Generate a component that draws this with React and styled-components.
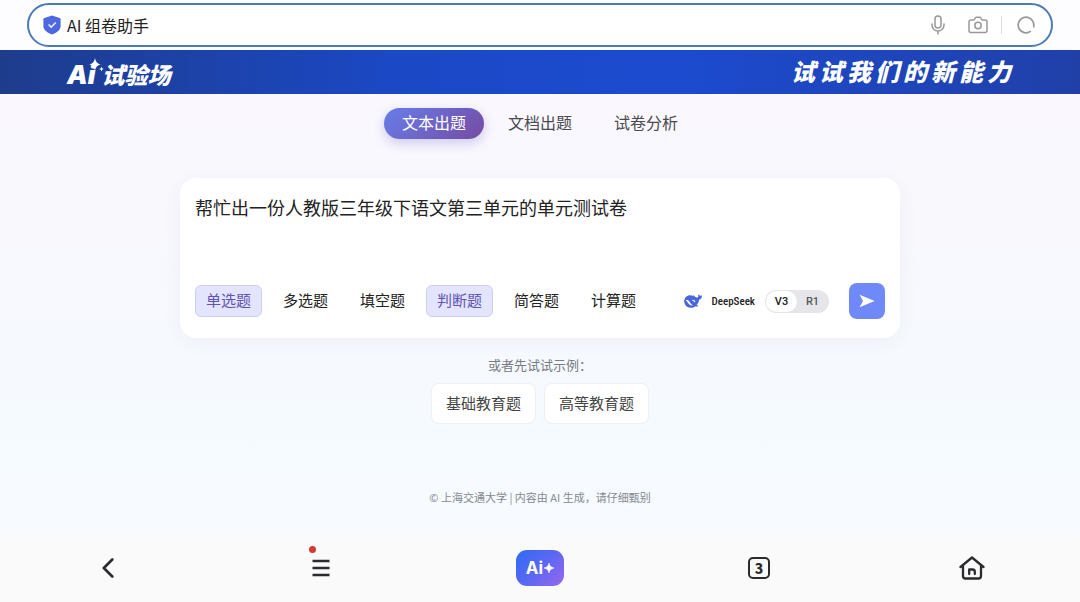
import React, { useState } from 'react';
import styled, { createGlobalStyle } from 'styled-components';

const GlobalStyle = createGlobalStyle`
  * {
    box-sizing: border-box;
  }

  body {
    margin: 0;
    font-family: 'Noto Sans CJK SC', 'Noto Sans', sans-serif;
    color: #222;
  }

  button,
  input,
  textarea {
    font-family: inherit;
    color: inherit;
  }
`;

const Page = styled.div`
  min-height: 100vh;
  display: flex;
  flex-direction: column;
  background: linear-gradient(180deg, #faf8fe 90px, #f8f8fd 230px, #f5faff 420px, #f7fbff 530px);
`;

const TopBar = styled.header`
  padding: 3px 27px;
  background: #fdfdff;
`;

const SearchBox = styled.div`
  height: 44px;
  display: flex;
  align-items: center;
  gap: 13px;
  padding: 0 14px;
  border: 2px solid #4a7ab8;
  border-radius: 22px;
  background: #fff;
`;

const SearchField = styled.label`
  flex: 1;
  display: flex;
  align-items: center;
  gap: 6px;
`;

const SearchInput = styled.input`
  flex: 1;
  min-width: 0;
  padding: 0;
  border: none;
  outline: none;
  background: transparent;
  font-size: 16px;
  line-height: 24px;
`;

const SearchTools = styled.div`
  display: flex;
  gap: 20px;
`;

const IconButton = styled.button`
  display: flex;
  align-items: center;
  justify-content: center;
  width: 20px;
  height: 24px;
  padding: 0;
  border: none;
  background: transparent;
  color: #999;
  cursor: pointer;
`;

const Reload = styled.div`
  display: flex;
  align-items: center;
  gap: 14px;
  padding-right: 1px;

  &::before {
    content: '';
    width: 1px;
    height: 18px;
    background: #ddd;
  }
`;

const Banner = styled.div`
  height: 44px;
  display: flex;
  align-items: center;
  justify-content: space-between;
  padding: 0 65px 0 67px;
  background: linear-gradient(90deg, #1e3c8c, #1b48c4 36%, #1c4bd0 62%, #2040a8);
  color: #fff;
  font-style: italic;
  font-weight: 900;
`;

const Logo = styled.div`
  position: relative;
  display: flex;
  align-items: baseline;
  gap: 6px;
  padding-top: 4px;
  font-size: 23px;
  line-height: 32px;
`;

const LogoMark = styled.span`
  font-family: Inter, 'Noto Sans CJK SC', sans-serif;
  font-size: 26px;
`;

const LogoStar = styled.svg`
  position: absolute;
  left: 20px;
  top: 4px;
`;

const Slogan = styled.div`
  padding-bottom: 2px;
  font-size: 24px;
  line-height: 32px;
  letter-spacing: 4px;
`;

const Main = styled.main`
  flex: 1;
  display: flex;
  flex-direction: column;
  align-items: center;
  padding: 14px 16px 25px;
`;

const Tabs = styled.nav`
  display: flex;
  gap: 6px;
`;

const Tab = styled.button`
  height: 31px;
  padding: 0 18px 3px;
  border: none;
  border-radius: 16px;
  font-size: 16px;
  line-height: 24px;
  cursor: pointer;
  color: ${(props) => (props.$active ? '#fff' : '#4a4a52')};
  background: ${(props) => (props.$active ? 'linear-gradient(135deg, #667eea, #764ba2)' : 'transparent')};
  box-shadow: ${(props) => (props.$active ? '0 4px 12px rgba(102, 90, 200, 0.3)' : 'none')};
`;

const Card = styled.section`
  width: 100%;
  max-width: 720px;
  margin-top: 39px;
  padding: 15px 15px 19px;
  border-radius: 16px;
  background: #fff;
  box-shadow: 0 4px 20px rgba(60, 70, 110, 0.05);
`;

const Prompt = styled.textarea`
  display: block;
  width: 100%;
  height: 90px;
  padding: 0;
  border: none;
  outline: none;
  resize: none;
  background: transparent;
  font-size: 18px;
  line-height: 28px;
`;

const Toolbar = styled.div`
  display: flex;
  align-items: center;
  justify-content: space-between;
`;

const ChipList = styled.div`
  display: flex;
  gap: 10px;
`;

const Chip = styled.button`
  height: 32px;
  padding: 0 10px 2px;
  border: 1px solid ${(props) => (props.$active ? '#cdd0ee' : 'transparent')};
  border-radius: 6px;
  background: ${(props) => (props.$active ? '#e2e5fd' : 'transparent')};
  color: ${(props) => (props.$active ? '#6153b4' : '#222')};
  font-size: 15px;
  line-height: 22px;
  cursor: pointer;
`;

const Actions = styled.div`
  display: flex;
  align-items: center;
  gap: 20px;
`;

const Model = styled.div`
  display: flex;
  align-items: center;
  gap: 10px;
  font-family: 'Roboto Condensed', Roboto, sans-serif;
  font-size: 11px;
  font-weight: 500;
`;

const Switch = styled.div`
  display: flex;
  padding: 1px;
  border-radius: 12px;
  background: #e5e5ea;
`;

const SwitchOption = styled.button`
  width: 31px;
  height: 21px;
  padding: 0;
  border: none;
  border-radius: 11px;
  background: ${(props) => (props.$active ? '#fff' : 'transparent')};
  color: ${(props) => (props.$active ? '#222' : '#555')};
  font-family: Roboto, sans-serif;
  font-size: 11px;
  font-weight: 500;
  cursor: pointer;
`;

const SendButton = styled.button`
  display: flex;
  align-items: center;
  justify-content: center;
  width: 36px;
  height: 36px;
  padding: 0;
  border: none;
  border-radius: 8px;
  background: #6f8af8;
  cursor: pointer;
`;

const Hint = styled.p`
  margin: 17px 0 8px;
  color: #777b82;
  font-size: 13px;
  line-height: 20px;
`;

const Examples = styled.div`
  display: flex;
  gap: 8px;
`;

const ExampleButton = styled.button`
  height: 41px;
  padding: 0 14px 2px;
  border: 1px solid #eef0f4;
  border-radius: 8px;
  background: #fff;
  color: #444;
  font-size: 15px;
  line-height: 22px;
  cursor: pointer;
`;

const Footer = styled.footer`
  margin-top: auto;
  color: #85898f;
  font-size: 11px;
  line-height: 20px;
`;

const BottomNav = styled.nav`
  height: 70px;
  display: flex;
  align-items: center;
  justify-content: space-between;
  padding: 2px 90px 0;
  background: #fafafb;
`;

const NavButton = styled.button`
  position: relative;
  display: flex;
  align-items: center;
  justify-content: center;
  width: 36px;
  height: 36px;
  padding: 0;
  border: none;
  background: transparent;
  color: #2b2b2e;
  cursor: pointer;
`;

const Dot = styled.span`
  position: absolute;
  top: -4px;
  left: 6px;
  width: 7px;
  height: 7px;
  border-radius: 50%;
  background: #d8392f;
`;

const AiButton = styled(NavButton)`
  width: 48px;
  gap: 1px;
  border-radius: 11px;
  background: linear-gradient(135deg, #2f6bf6, #5b68f2 50%, #9a66ee);
  color: #fff;
  font-family: Inter, sans-serif;
  font-size: 17px;
  font-weight: 700;
  line-height: 24px;
`;

const TabCount = styled.span`
  width: 22px;
  height: 22px;
  border: 2px solid #2b2b2e;
  border-radius: 5px;
  font-size: 14px;
  font-weight: 900;
  line-height: 18px;
  text-align: center;
`;

const ShieldIcon = () => (
  <svg width="18" height="20" viewBox="0 0 18 20">
    <path d="M9 .6 16.6 3c.6.2 1 .7 1 1.300V11c0 4-3.600 6.700-8.600 8.600C4 17.700.4 15 .4 11V4.300c0-.6.4-1.100 1-1.300z" fill="#4d68e0" />
    <path d="m5.600 9.500 2.600 2.600 4.600-4.600" fill="none" stroke="#e8edff" strokeWidth="1.600" />
  </svg>
);

const MicIcon = () => (
  <svg width="14" height="20" viewBox="0 0 14 20" fill="none" stroke="currentColor" strokeWidth="1.500" strokeLinecap="round">
    <rect x="4" y="1" width="6" height="12" rx="3" />
    <path d="M1 9v1a6 6 0 0 0 12 0V9M7 16v3" />
  </svg>
);

const CameraIcon = () => (
  <svg width="20" height="18" viewBox="0 0 20 18" fill="none" stroke="currentColor" strokeWidth="1.500" strokeLinejoin="round">
    <path d="M3 4h2.500c.8 0 1-.5 1.300-1.300C7.100 1.700 7.500 1.200 8.300 1.200h3.400c.8 0 1.200.5 1.500 1.500.3.800.5 1.300 1.300 1.300H17a2 2 0 0 1 2 2v8.500a2 2 0 0 1-2 2H3a2 2 0 0 1-2-2V6a2 2 0 0 1 2-2z" />
    <circle cx="10" cy="9.500" r="3.200" />
  </svg>
);

const ReloadIcon = () => (
  <svg width="18" height="18" viewBox="0 0 18 18" fill="none" stroke="currentColor" strokeWidth="1.700">
    <path d="M13.800 15.200A7.800 7.800 0 1 1 16.800 9v2.600" />
  </svg>
);

const WhaleIcon = () => (
  <svg width="18" height="14" viewBox="0 0 18 14">
    <path
      d="M17.800 1.200c-.6.500-1.300.6-2 .3-.6-.2-1-.6-1.200-1.300-.5.700-.6 1.600-.2 2.400-.2.700-.8 1.100-1.600 1-1.200-.2-2-1.500-4-2.600.1.600.4 1 .9 1.400C7.400 1 4.700 1 2.800 2.300.7 3.800-.2 6.300.3 8.700c.7 3.100 3.400 5 6.600 5 1.700 0 3.200-.5 4.500-1.500.9.400 2 .5 2.700.1.300-.3 0-.6-.5-.8-.4-.2-.7-.4-.9-.7 1.400-1.500 2.200-3.200 2.400-5.100 1.700-.5 2.700-1.800 2.700-3.300z"
      fill="#4a66dc"
    />
    <path d="M1.800 6.200c1.400-.7 2.800 0 3.700 1.500.8 1.400 1.900 2.700 3.400 3.900-2 .1-3.500-.8-4.600-2.300C3.500 8.100 2.800 7 1.800 6.200z" fill="#fff" />
    <path d="M8.300 6.300c1.200-.3 2.300.5 2.500 1.900" fill="none" stroke="#fff" strokeWidth="1.200" />
  </svg>
);

const SendIcon = () => (
  <svg width="16" height="14" viewBox="0 0 16 14">
    <path d="M.6.8 15.600 7 .6 13.200 4 7z" fill="#fff" />
  </svg>
);

const BackIcon = () => (
  <svg width="12" height="20" viewBox="0 0 12 20" fill="none" stroke="currentColor" strokeWidth="2.600" strokeLinecap="round" strokeLinejoin="round">
    <path d="M10.300 1.500 1.800 10l8.500 8.500" />
  </svg>
);

const MenuIcon = () => (
  <svg width="18" height="18" viewBox="0 0 18 18" stroke="currentColor" strokeWidth="2.400">
    <path d="M.5 2h17M.5 9h17M.5 16h17" />
  </svg>
);

const HomeIcon = () => (
  <svg width="26" height="24" viewBox="0 0 26 24" fill="none" stroke="currentColor" strokeWidth="2.300" strokeLinecap="round" strokeLinejoin="round">
    <path d="M1.500 11 13 1.500 24.500 11M4 10v10a2.500 2.500 0 0 0 2.500 2.500h13A2.500 2.500 0 0 0 22 20V10" />
    <path d="M10.200 18v-4.500h3.300a2.300 2.300 0 0 1 2.300 2.300V18" />
  </svg>
);

const SparkIcon = () => (
  <svg width="10" height="10" viewBox="0 0 10 10">
    <path d="M5 0c.6 2.800 1.600 4 5 5-3.400 1-4.400 2.200-5 5-.6-2.800-1.600-4-5-5 3.400-1 4.400-2.200 5-5z" fill="#fff" stroke="#fff" strokeWidth=".5" />
  </svg>
);

const tabs = ['文本出题', '文档出题', '试卷分析'];
const questionTypes = ['单选题', '多选题', '填空题', '判断题', '简答题', '计算题'];
const models = ['V3', 'R1'];
const examples = ['基础教育题', '高等教育题'];

const App = () => {
  const [query, setQuery] = useState('AI 组卷助手');
  const [prompt, setPrompt] = useState('帮忙出一份人教版三年级下语文第三单元的单元测试卷');
  const [activeTab, setActiveTab] = useState('文本出题');
  const [selected, setSelected] = useState(['单选题', '判断题']);
  const [model, setModel] = useState('V3');

  const toggleType = (type) => {
    setSelected(selected.includes(type) ? selected.filter((t) => t !== type) : [...selected, type]);
  };

  return (
    <Page>
      <GlobalStyle />
      <TopBar>
        <SearchBox>
          <SearchField>
            <ShieldIcon />
            <SearchInput aria-label="搜索" value={query} onChange={(e) => setQuery(e.target.value)} />
          </SearchField>
          <SearchTools>
            <IconButton aria-label="语音"><MicIcon /></IconButton>
            <IconButton aria-label="拍照"><CameraIcon /></IconButton>
          </SearchTools>
          <Reload>
            <IconButton aria-label="刷新"><ReloadIcon /></IconButton>
          </Reload>
        </SearchBox>
      </TopBar>

      <Banner>
        <Logo>
          <LogoMark>Ai</LogoMark>
          <span>试验场</span>
          <LogoStar width="17" height="15" viewBox="0 0 17 15">
            <path d="M8 0c.8 4 2.200 5.600 6 6.500-3.800.9-5.200 2.500-6 6.500-.8-4-2.200-5.600-6-6.500C5.800 5.600 7.200 4 8 0zM14.500 8.500c.3 1.500.9 2.200 2.500 2.500-1.600.3-2.200 1-2.500 2.500-.3-1.500-.9-2.200-2.500-2.500 1.600-.3 2.200-1 2.500-2.500z" fill="#fff" />
          </LogoStar>
        </Logo>
        <Slogan>试试我们的新能力</Slogan>
      </Banner>

      <Main>
        <Tabs>
          {tabs.map((tab) => (
            <Tab key={tab} $active={tab === activeTab} onClick={() => setActiveTab(tab)}>
              {tab}
            </Tab>
          ))}
        </Tabs>

        <Card>
          <Prompt aria-label="出题要求" value={prompt} onChange={(e) => setPrompt(e.target.value)} />
          <Toolbar>
            <ChipList>
              {questionTypes.map((type) => (
                <Chip key={type} $active={selected.includes(type)} onClick={() => toggleType(type)}>
                  {type}
                </Chip>
              ))}
            </ChipList>
            <Actions>
              <Model>
                <WhaleIcon />
                <span>DeepSeek</span>
                <Switch>
                  {models.map((name) => (
                    <SwitchOption key={name} $active={name === model} onClick={() => setModel(name)}>
                      {name}
                    </SwitchOption>
                  ))}
                </Switch>
              </Model>
              <SendButton aria-label="发送"><SendIcon /></SendButton>
            </Actions>
          </Toolbar>
        </Card>

        <Hint>或者先试试示例：</Hint>
        <Examples>
          {examples.map((example) => (
            <ExampleButton key={example}>{example}</ExampleButton>
          ))}
        </Examples>

        <Footer>© 上海交通大学 | 内容由 AI 生成，请仔细甄别</Footer>
      </Main>

      <BottomNav>
        <NavButton aria-label="返回"><BackIcon /></NavButton>
        <NavButton aria-label="菜单">
          <Dot />
          <MenuIcon />
        </NavButton>
        <AiButton>
          Ai
          <SparkIcon />
        </AiButton>
        <NavButton aria-label="标签页"><TabCount>3</TabCount></NavButton>
        <NavButton aria-label="主页"><HomeIcon /></NavButton>
      </BottomNav>
    </Page>
  );
};

export default App;
